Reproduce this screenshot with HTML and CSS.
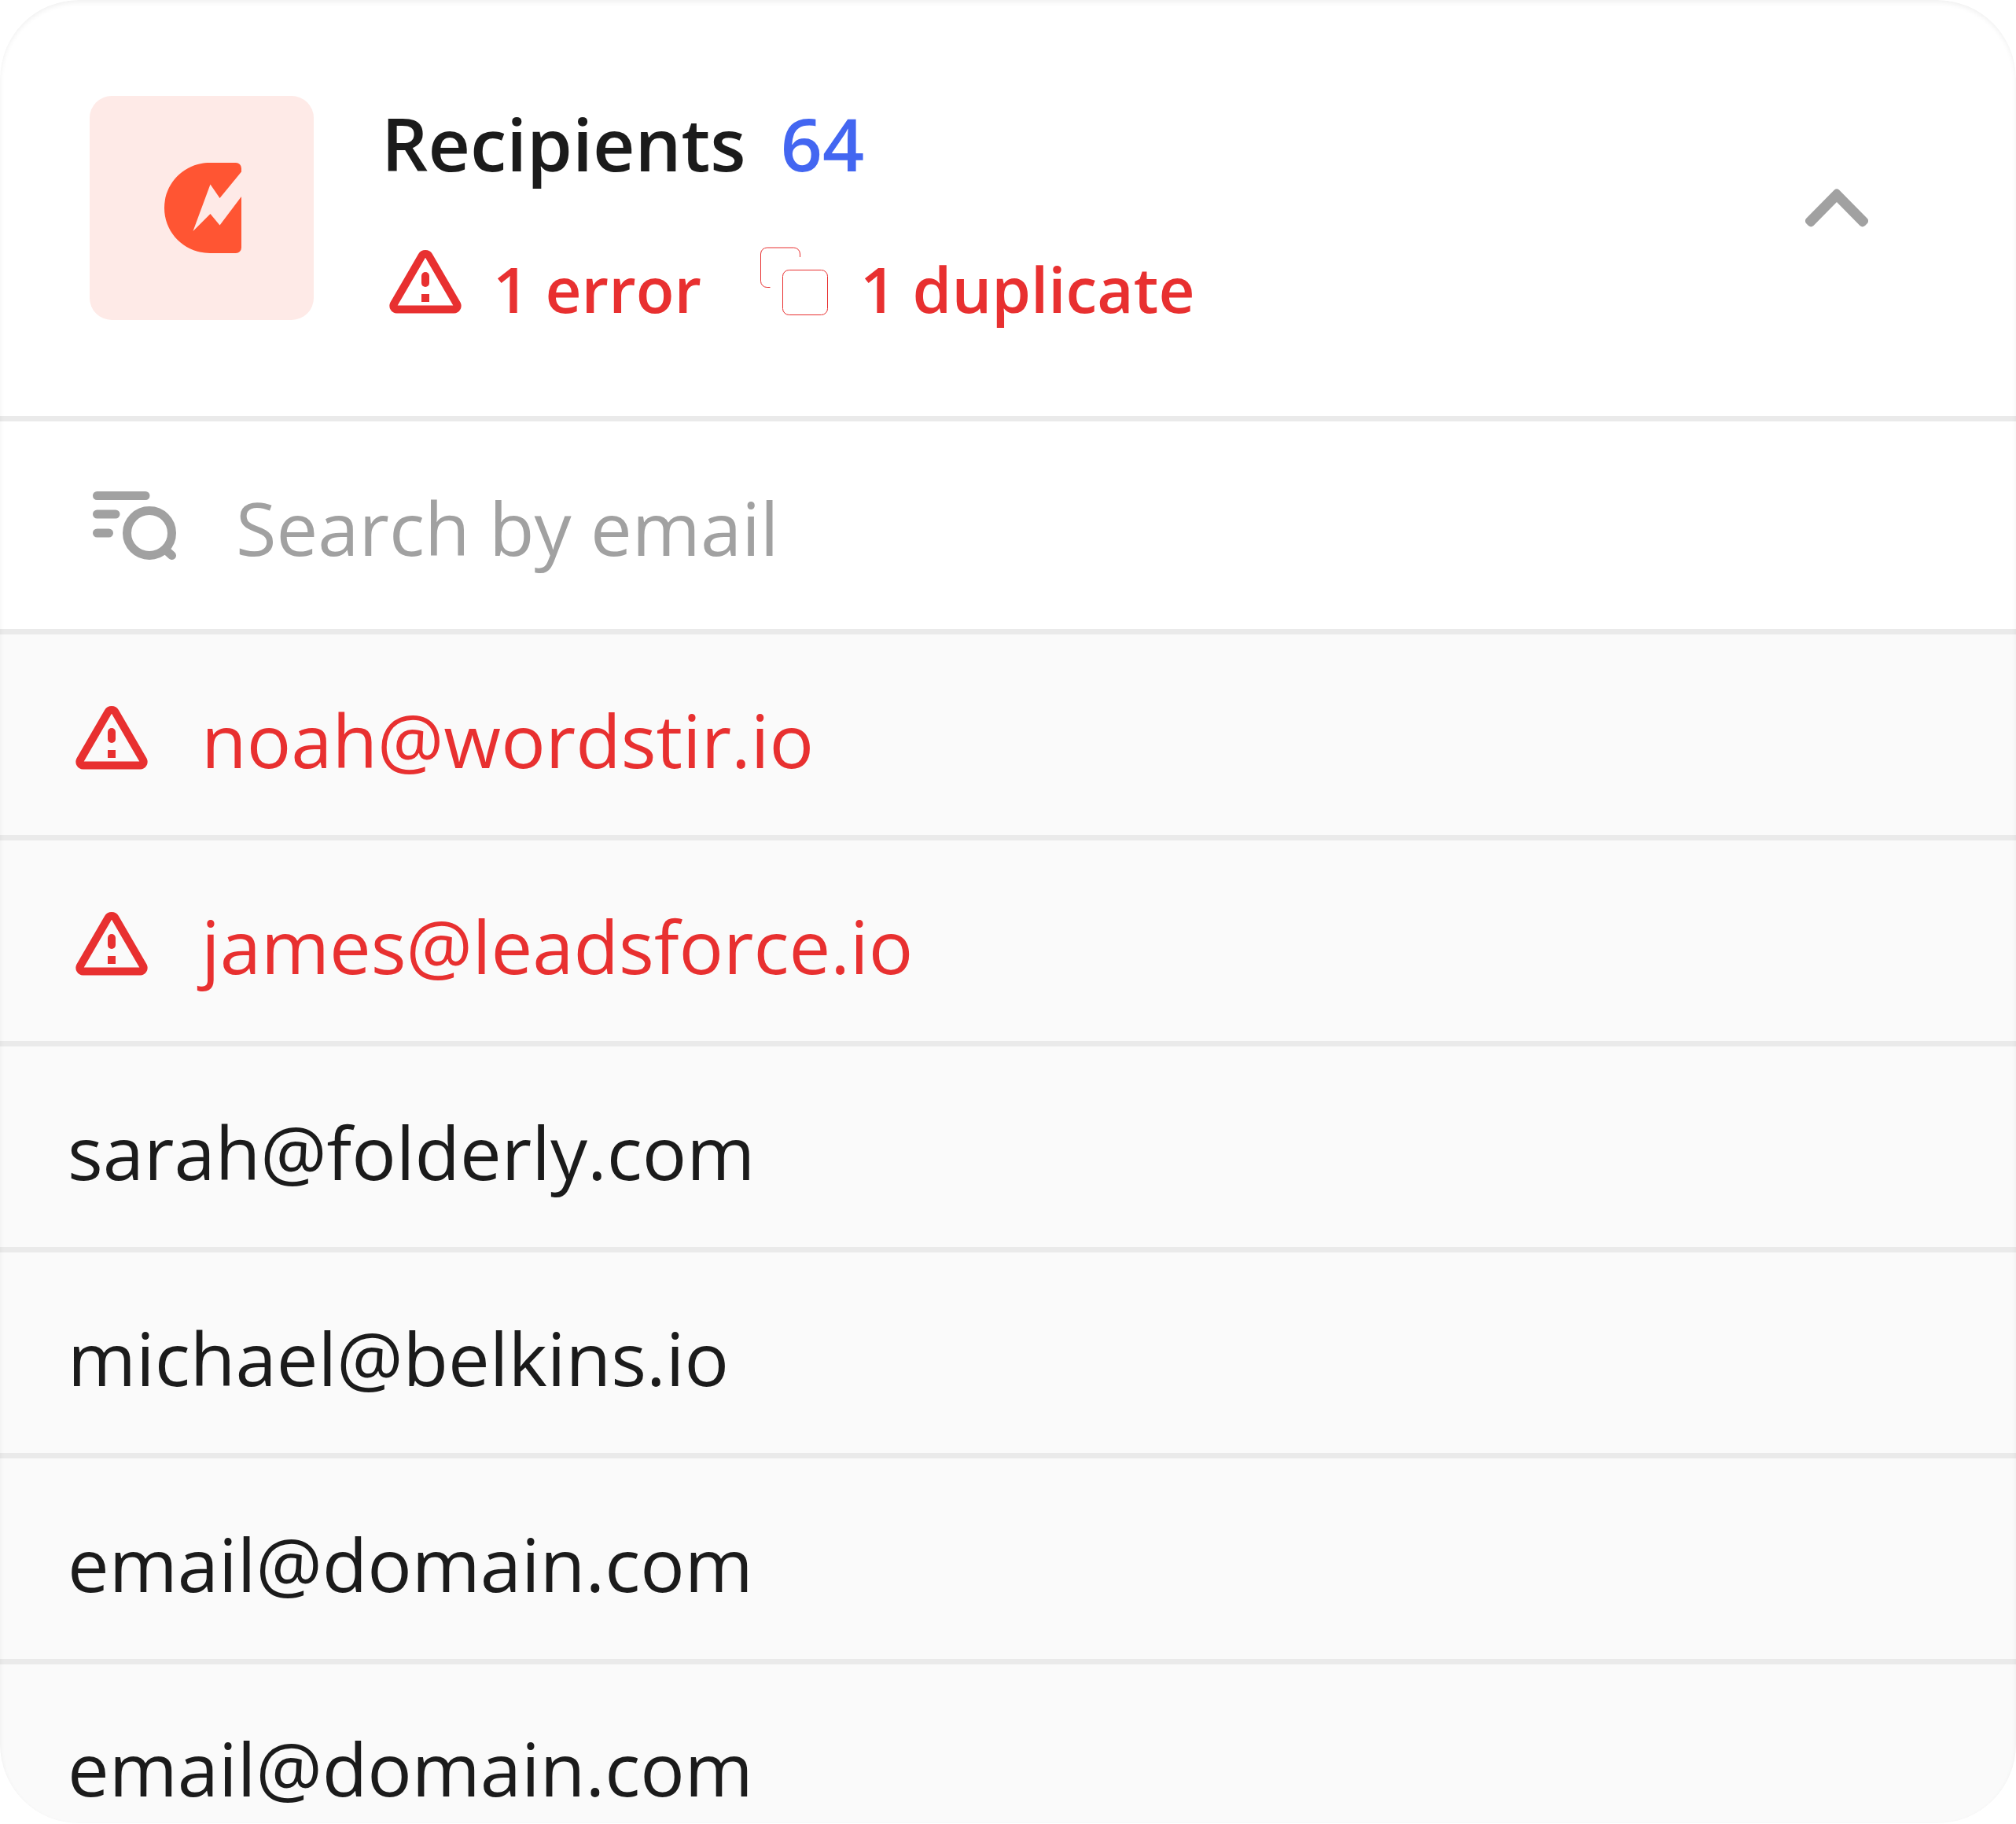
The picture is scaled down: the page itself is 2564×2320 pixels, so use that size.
FILE: index.html
```html
<!DOCTYPE html>
<html lang="en">
<head>
    <meta charset="UTF-8">
    <meta name="viewport" content="width=device-width, initial-scale=1.0">
    <title>Recipients</title>
    <link rel="stylesheet" href="styles.css">
</head>
<body>
    <!-- shared icon shapes -->
    <svg class="sprite" aria-hidden="true">
        <symbol id="icon-alert" viewBox="0 0 92 82">
            <path d="M41.5 8.5a5.2 5.2 0 0 1 9 0L86.2 70a4.6 4.6 0 0 1-4 6.500H9.800a4.600 4.600 0 0 1-4-6.500z" fill="none" stroke="currentColor" stroke-width="10" stroke-linejoin="round"/>
            <rect x="41" y="29" width="10" height="19" rx="5" fill="currentColor"/>
            <rect x="41" y="57" width="10" height="10" fill="currentColor"/>
        </symbol>
    </svg>

    <main class="card">
        <header class="card-header">
            <div class="logo">
                <svg width="98" height="115" viewBox="0 0 98 115" aria-hidden="true">
                    <path fill="#ff5533" d="M58 0h33a7 7 0 0 1 7 7v4.500L70.500 45 58.500 27.500 36.500 87 58.500 65 70.500 79.500 98 43v65a7 7 0 0 1-7 7H58C26 115 0 89.500 0 57.500S26 0 58 0z"/>
                </svg>
            </div>
            <div class="summary">
                <h1 class="title">Recipients <span class="count">64</span></h1>
                <ul class="issues">
                    <li class="issue">
                        <svg class="icon-alert" aria-hidden="true"><use href="#icon-alert"/></svg>
                        1 error
                    </li>
                    <li class="issue">
                        <svg class="icon-copy" viewBox="0 0 88 88" aria-hidden="true">
                            <g fill="none" stroke="currentColor" stroke-width="1">
                                <path d="M51.500 13V9a8 8 0 0 0-8-8h-34a8 8 0 0 0-8 8v34.500a8 8 0 0 0 8 8h4"/>
                                <rect x="29.500" y="29.500" width="57" height="57" rx="8"/>
                            </g>
                        </svg>
                        1 duplicate
                    </li>
                </ul>
            </div>
            <button class="toggle" type="button" aria-label="Collapse">
                <svg width="80" height="50" viewBox="0 0 80 50" aria-hidden="true">
                    <path fill="#a1a1a1" d="M37 1.500a4.500 4.500 0 0 1 6 0L79 38a5 5 0 0 1 0 6l-3 3a5 5 0 0 1-6.500 0L40 17 10.500 47A5 5 0 0 1 4 47l-3-3a5 5 0 0 1 0-6z"/>
                </svg>
            </button>
        </header>

        <label class="search">
            <svg width="106" height="88" viewBox="0 0 106 88" fill="none" stroke="#a1a1a1" stroke-width="11" stroke-linecap="round" aria-hidden="true">
                <path d="M5.500 6.500h61.500M5.500 30H29M5.500 54H20.500M95 77.500l5.500 5"/>
                <circle cx="72" cy="54" r="28.500"/>
            </svg>
            <input class="search-input" type="text" placeholder="Search by email" aria-label="Search by email">
        </label>

        <ul class="list">
            <li class="row row-error">
                <svg class="icon-alert" aria-hidden="true"><use href="#icon-alert"/></svg>
                noah@wordstir.io
            </li>
            <li class="row row-error">
                <svg class="icon-alert" aria-hidden="true"><use href="#icon-alert"/></svg>
                james@leadsforce.io
            </li>
            <li class="row">sarah@folderly.com</li>
            <li class="row">michael@belkins.io</li>
            <li class="row">email@domain.com</li>
            <li class="row">email@domain.com</li>
        </ul>
    </main>
</body>
</html>
```

FILE: styles.css
```css
:root {
    --text-color: #1b1b1b;
    --error-color: #e83030;
    --accent-color: #4366f1;
    --muted-color: #a1a1a1;
    --border-color: #eaeaea;
    --row-color: #fafafa;
}

* {
    box-sizing: border-box;
    margin: 0;
    padding: 0;
}

body {
    font-family: 'Open Sans', 'Noto Sans', sans-serif;
    font-size: 94px;
    line-height: 128px;
    color: var(--text-color);
    background-color: white;
}

ul {
    list-style: none;
}

svg {
    display: block;
    flex-shrink: 0;
}

.sprite {
    position: absolute;
    width: 0;
    height: 0;
}

.card {
    position: relative;
    background-color: white;
    border-radius: 100px;
    overflow: hidden;
}

/* soft inner edge, drawn over the rows */
.card::after {
    content: '';
    position: absolute;
    inset: 0;
    border-radius: inherit;
    box-shadow: inset 0 3px 6px rgba(0, 0, 0, 0.06);
    pointer-events: none;
}

.card-header {
    display: flex;
    align-items: flex-start;
    padding: 122px 188px 106px 114px;
    border-bottom: 7px solid var(--border-color);
}

.logo {
    display: flex;
    align-items: center;
    justify-content: center;
    width: 285px;
    height: 285px;
    margin-right: 86px;
    padding-left: 2px;
    background-color: #feeae7;
    border-radius: 28px;
}

.summary {
    flex: 1;
}

.title {
    font-size: 93px;
    font-weight: 600;
    line-height: 120px;
}

.count {
    margin-left: 20px;
    color: var(--accent-color);
}

.issues {
    display: flex;
    gap: 74px;
    margin-top: 69px;
    padding-left: 10px;
    color: var(--error-color);
    font-size: 80px;
    font-weight: 600;
    line-height: 112px;
}

.issue {
    display: flex;
    align-items: flex-start;
    gap: 40px;
}

.icon-alert {
    width: 92px;
    height: 82px;
}

.icon-copy {
    width: 88px;
}

.issue svg {
    height: 88px;
    margin-top: 3px;
}

.toggle {
    height: 285px;
    border: none;
    background: none;
    cursor: pointer;
}

.search {
    display: flex;
    align-items: center;
    gap: 76px;
    height: 271px;
    padding: 0 118px;
    border-bottom: 7px solid var(--border-color);
}

.search-input {
    flex: 1;
    padding-top: 6px;
    border: none;
    outline: none;
    background: none;
    font: inherit;
    color: var(--text-color);
}

.search-input::placeholder {
    color: var(--muted-color);
    opacity: 1;
}

.row {
    display: flex;
    align-items: center;
    height: 262px;
    padding: 12px 86px 0;
    background-color: var(--row-color);
    border-bottom: 7px solid var(--border-color);
}

.row:last-child {
    height: 202px;
    padding-top: 62px;
    border-bottom: none;
}

.row-error {
    gap: 68px;
    padding-left: 96px;
    color: var(--error-color);
}

.row-error .icon-alert {
    margin-bottom: 6px;
}
```
